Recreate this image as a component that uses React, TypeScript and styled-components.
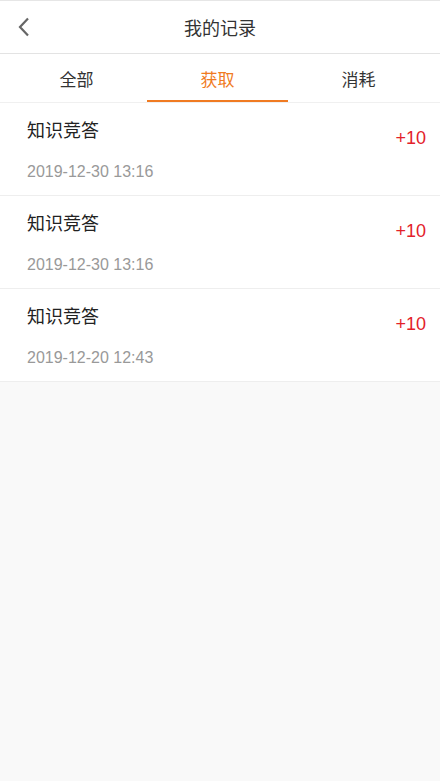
import { useState } from 'react'
import { createGlobalStyle, styled } from 'styled-components'

const GlobalStyle = createGlobalStyle`
  body {
    margin: 0;
    padding: 0;
    background-color: #f9f9f9;
    font-family: 'Liberation Sans', 'Noto Sans CJK SC', sans-serif;
  }
`

const Page = styled.div`
  width: 100%;
  min-height: 781px;
  background-color: #f9f9f9;
`

const Header = styled.div`
  height: 52px;
  display: flex;
  align-items: center;
  justify-content: center;
  position: relative;
  background-color: white;
  border-top: 1px solid #e6e6e6;
  border-bottom: 1px solid #e3e3e3;
`

const BackButton = styled.div`
  position: absolute;
  left: 12px;
  top: 14px;
  width: 24px;
  height: 24px;
  display: flex;
  align-items: center;
  justify-content: center;
`

const Title = styled.div`
  font-size: 18px;
  color: #333;
`

const Tabs = styled.div`
  display: flex;
  height: 48px;
  padding: 0 11px 0 6px;
  background-color: white;
  border-bottom: 1px solid #f0f0f0;
`

const Tab = styled.div<{ $active: boolean }>`
  flex: 1;
  display: flex;
  align-items: center;
  justify-content: center;
  position: relative;
  font-size: 17px;
  color: ${p => (p.$active ? '#f07b22' : '#333')};
  cursor: pointer;

  &::after {
    content: '';
    display: ${p => (p.$active ? 'block' : 'none')};
    position: absolute;
    bottom: 0;
    left: 0;
    right: 0;
    height: 2px;
    background-color: #f07b22;
  }
`

const Item = styled.div`
  display: flex;
  justify-content: space-between;
  height: 93px;
  box-sizing: border-box;
  padding: 16px 14px 0 27px;
  background-color: white;
  border-bottom: 1px solid #eeeeee;
`

const ItemInfo = styled.div`
  display: flex;
  flex-direction: column;
`

const ItemName = styled.div`
  font-size: 18px;
  line-height: 24px;
  color: #222;
`

const ItemDate = styled.div`
  margin-top: 19px;
  font-size: 16px;
  line-height: 20px;
  color: #999;
`

const Amount = styled.div`
  margin-top: 7px;
  font-size: 18px;
  line-height: 24px;
  color: #e3212a;
`

const records = [
  { name: '知识竞答', date: '2019-12-30 13:16', amount: '+10' },
  { name: '知识竞答', date: '2019-12-30 13:16', amount: '+10' },
  { name: '知识竞答', date: '2019-12-20 12:43', amount: '+10' },
]

const tabs = ['全部', '获取', '消耗']

function App() {
  const [active, setActive] = useState(1)

  return (
    <Page>
      <GlobalStyle />
      <Header>
        <BackButton>
          <svg width="14" height="20" viewBox="0 0 14 20">
            <polyline points="11,1.5 3,10 11,18.5" fill="none" stroke="#666" strokeWidth="2.2" />
          </svg>
        </BackButton>
        <Title>我的记录</Title>
      </Header>

      <Tabs>
        {tabs.map((t, i) => (
          <Tab key={t} $active={i === active} onClick={() => setActive(i)}>
            {t}
          </Tab>
        ))}
      </Tabs>

      {records.map((r, i) => (
        <Item key={i}>
          <ItemInfo>
            <ItemName>{r.name}</ItemName>
            <ItemDate>{r.date}</ItemDate>
          </ItemInfo>
          <Amount>{r.amount}</Amount>
        </Item>
      ))}
    </Page>
  )
}

export default App
